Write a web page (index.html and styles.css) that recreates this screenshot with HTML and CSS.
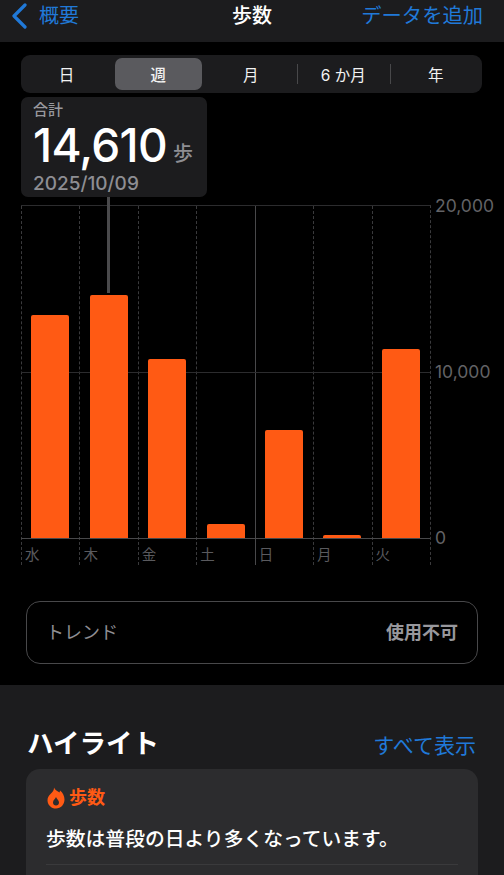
FILE: index.html
```html
<!DOCTYPE html>
<html lang="ja">
<head>
<meta charset="utf-8">
<title>歩数</title>
<link rel="stylesheet" href="styles.css">
</head>
<body>
<header class="nav">
  <a class="back">
    <svg class="chevron" width="16" height="26" viewBox="0 0 16 26"><path d="M14 2 L3 13 L14 24" fill="none" stroke="#2079d8" stroke-width="3.2" stroke-linecap="round" stroke-linejoin="round"/></svg>
    <span>概要</span>
  </a>
  <div class="title">歩数</div>
  <a class="add">データを追加</a>
</header>

<nav class="segments">
  <div class="seg">日</div>
  <div class="seg active">週</div>
  <div class="seg">月</div>
  <div class="seg sep">6 か月</div>
  <div class="seg sep">年</div>
</nav>

<section class="tip">
  <div class="tip-label">合計</div>
  <div class="tip-value"><span class="num">14,610</span><span class="unit">歩</span></div>
  <div class="tip-date">2025/10/09</div>
</section>

<section class="chart">
  <div class="plot">
    <div class="gridline mid"></div>
    <div class="gridline base"></div>
    <div class="col"><div class="area"><div class="bar h-wed"></div></div><div class="day">水</div></div>
    <div class="col"><div class="area"><div class="pointer"></div><div class="bar h-thu"></div></div><div class="day">木</div></div>
    <div class="col"><div class="area"><div class="bar h-fri"></div></div><div class="day">金</div></div>
    <div class="col"><div class="area"><div class="bar h-sat"></div></div><div class="day">土</div></div>
    <div class="col solid"><div class="area"><div class="bar h-sun"></div></div><div class="day">日</div></div>
    <div class="col"><div class="area"><div class="bar h-mon"></div></div><div class="day">月</div></div>
    <div class="col last"><div class="area"><div class="bar h-tue"></div></div><div class="day">火</div></div>
  </div>
  <div class="axis">
    <span>20,000</span>
    <span>10,000</span>
    <span>0</span>
  </div>
</section>

<section class="trend">
  <span class="trend-label">トレンド</span>
  <span class="trend-value">使用不可</span>
</section>

<section class="lower">
  <div class="lower-head">
    <h2>ハイライト</h2>
    <a class="all">すべて表示</a>
  </div>
  <article class="card">
    <div class="card-head">
      <svg width="18" height="22" viewBox="0 0 18 22"><path fill-rule="evenodd" fill="#ff5a14" d="M7 0.5 C8 3 10.5 4 12.5 5.5 C12.8 4.8 13 4.2 13 3.5 C15.8 5.6 17.5 9 17.5 12.5 C17.5 17.6 13.8 21.5 9 21.5 C4.2 21.5 0.5 17.8 0.5 13.2 C0.5 10.6 1.8 8.6 3.5 7 C5.6 5 7.3 3.2 7 0.5 Z M9 10 C8.5 11.8 6 13 6 15.5 C6 17.3 7.3 18.5 9 18.5 C10.7 18.5 12 17.3 12 15.5 C12 13.2 9.8 12 9 10 Z"/></svg>
      <span>歩数</span>
    </div>
    <p class="card-text">歩数は普段の日より多くなっています。</p>
    <div class="card-rule"></div>
  </article>
</section>
</body>
</html>
```
FILE: styles.css
```css
* { box-sizing: border-box; }
html, body { margin: 0; padding: 0; }
body {
  width: 504px;
  height: 875px;
  overflow: hidden;
  background: #000;
  color: #fff;
  font-family: Inter, "Noto Sans CJK JP", sans-serif;
}
.nav {
  height: 42px;
  background: #1c1c1e;
  display: flex;
  align-items: center;
  justify-content: space-between;
  padding: 0 21px 11px 11px;
  position: relative;
  font-size: 20px;
  line-height: 28px;
}
.back { display: flex; align-items: center; gap: 12px; color: #2079d8; }
.chevron { display: block; }
.add { color: #2079d8; font-size: 20.3px; }
.title {
  position: absolute;
  left: 232px;
  top: 2px;
  font-weight: 500;
}
.segments {
  margin: 13px 22px 0 21px;
  height: 38px;
  border-radius: 9px;
  background: #1c1c1e;
  display: grid;
  grid-template-columns: 1fr repeat(4, 92.5px);
  padding: 3px 0;
  font-size: 15.5px;
}
.seg {
  display: flex;
  align-items: center;
  justify-content: center;
  position: relative;
  color: #f2f2f2;
}
.seg.active { background: #5a5a5e; border-radius: 7px; font-weight: 500; margin: 0 3px; }
.seg.sep::before {
  content: "";
  position: absolute;
  left: 0;
  top: 6px;
  bottom: 6px;
  width: 1px;
  background: #48484a;
}
.tip {
  margin: 4px 0 0 21px;
  width: 186px;
  height: 100px;
  background: #1c1c1e;
  border-radius: 7px;
  padding: 3px 12px 0;
}
.tip-label { font-size: 15px; line-height: 20px; color: #98989d; font-weight: 500; }
.tip-value { display: flex; align-items: baseline; gap: 6px; height: 47px; margin-top: 2px; }
.num { font-size: 46px; line-height: 47px; font-weight: 500; letter-spacing: -0.7px; }
.unit { font-size: 20px; color: #8e8e93; font-weight: 500; position: relative; top: -1px; }
.tip-date { font-size: 19px; line-height: 26px; color: #8e8e93; font-weight: 500; margin-top: 2px; }
.chart {
  margin: 8px 0 0 21px;
  display: flex;
  height: 360px;
}
.plot {
  position: relative;
  display: flex;
  width: 410px;
  height: 360px;
  border-top: 1px solid #2c2c2e;
  border-right: 1px dashed #3a3a3c;
}
.gridline { position: absolute; left: 0; right: 0; height: 1px; background: #2c2c2e; }
.gridline.mid { top: 166px; }
.gridline.base { top: 332px; background: #48484a; }
.col {
  flex: 1;
  border-left: 1px dashed #3a3a3c;
  display: flex;
  flex-direction: column;
}
.col.solid { border-left: 1px solid #48484a; }
.area {
  position: relative;
  height: 332px;
  padding-right: 1px;
  display: flex;
  align-items: flex-end;
  justify-content: center;
}
.pointer {
  position: absolute;
  left: 27px;
  top: -9px;
  bottom: 245px;
  width: 3px;
  background: #4a4a4c;
}
.bar {
  position: relative;
  width: 38px;
  background: #ff5a14;
  border-radius: 2px 2px 0 0;
}
.h-wed { height: 223px; }
.h-thu { height: 243px; }
.h-fri { height: 179px; }
.h-sat { height: 14px; margin-left: 1px; }
.h-sun { height: 108px; }
.h-mon { height: 3px; }
.h-tue { height: 189px; }
.day {
  height: 27px;
  padding: 7px 0 0 3px;
  font-size: 14.5px;
  line-height: 20px;
  color: #5a5a5e;
}
.axis {
  height: 359px;
  margin: -9px 0 0 4px;
  display: flex;
  flex-direction: column;
  justify-content: space-between;
  padding-bottom: 7px;
  font-size: 17.5px;
  line-height: 20px;
  color: #636366;
}
.trend {
  margin: 36px 26px 0;
  height: 63px;
  border: 1px solid #48484a;
  border-radius: 14px;
  display: flex;
  align-items: center;
  justify-content: space-between;
  padding: 0 19px 3px 19px;
}
.trend-label { font-size: 18px; color: #8e8e93; }
.trend-value { font-size: 18px; color: #98989d; font-weight: 700; }
.lower {
  margin-top: 21px;
  height: 190px;
  background: #1c1c1e;
  padding: 0 26px;
}
.lower-head {
  height: 84px;
  display: flex;
  align-items: flex-end;
  justify-content: space-between;
  padding: 0 2px 8px 1px;
}
.lower-head h2 { margin: 0; font-size: 26.5px; line-height: 36px; font-weight: 700; }
.all { color: #2079d8; font-size: 21px; line-height: 28px; margin-bottom: 1px; }
.card {
  height: 120px;
  background: #2c2c2e;
  border-radius: 14px;
  padding: 17px 20px 0;
}
.card-head {
  display: flex;
  align-items: center;
  gap: 4px;
  padding-left: 1px;
  color: #ff5a14;
  font-size: 18px;
  line-height: 24px;
  font-weight: 700;
}
.card-head svg { display: block; }
.card-text { margin: 15px 0 0; font-size: 19.8px; line-height: 28px; font-weight: 500; }
.card-rule { height: 1px; background: #3a3a3c; margin-top: 11px; }
```
